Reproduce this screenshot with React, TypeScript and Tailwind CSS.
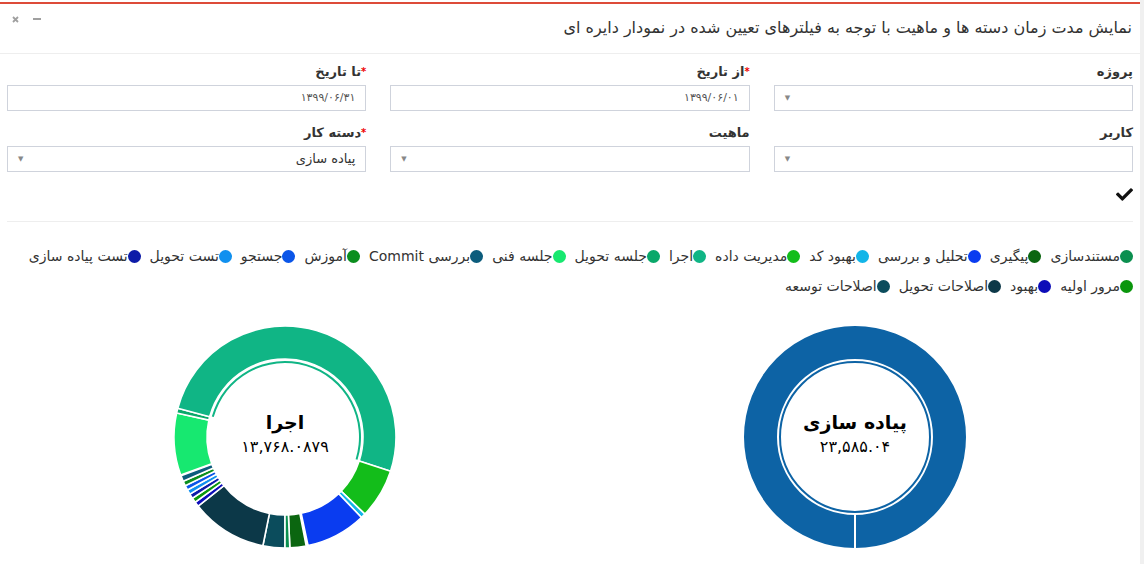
import React from 'react';

const font = { fontFamily: '"DejaVu Sans", "Liberation Sans", sans-serif' };

type Slice = { label: string; color: string; from: number; to: number };

const legend = [
  { label: 'مستندسازی', color: '#0b8f4f' },
  { label: 'پیگیری', color: '#0b6610' },
  { label: 'تحلیل و بررسی', color: '#0a3cf0' },
  { label: 'بهبود کد', color: '#12b5e8' },
  { label: 'مدیریت داده', color: '#13bd1a' },
  { label: 'اجرا', color: '#10b585' },
  { label: 'جلسه تحویل', color: '#0aa86a' },
  { label: 'جلسه فنی', color: '#17e870' },
  { label: 'بررسی Commit', color: '#0c5c7c' },
  { label: 'آموزش', color: '#0b8e1e' },
  { label: 'جستجو', color: '#0a55e8' },
  { label: 'تست تحویل', color: '#1090ef' },
  { label: 'تست پیاده سازی', color: '#0d1ba8' },
  { label: 'مرور اولیه', color: '#0a960c' },
  { label: 'بهبود', color: '#0c0cb8' },
  { label: 'اصلاحات تحویل', color: '#0c3848' },
  { label: 'اصلاحات توسعه', color: '#0b4c5c' },
];

// angles in degrees, clockwise from top
const slices: Slice[] = [
  { label: 'اصلاحات توسعه', color: '#0b4c5c', from: 180, to: 191.5 },
  { label: 'اصلاحات تحویل', color: '#0c3848', from: 191.5, to: 231.5 },
  { label: 'بهبود', color: '#0c0cb8', from: 231.5, to: 234 },
  { label: 'مرور اولیه', color: '#0a960c', from: 234, to: 236.5 },
  { label: 'تست پیاده سازی', color: '#0d1ba8', from: 236.5, to: 239 },
  { label: 'تست تحویل', color: '#1090ef', from: 239, to: 241.5 },
  { label: 'جستجو', color: '#0a55e8', from: 241.5, to: 244 },
  { label: 'آموزش', color: '#0b8e1e', from: 244, to: 246.5 },
  { label: 'بررسی Commit', color: '#0c5c7c', from: 246.5, to: 249.5 },
  { label: 'جلسه فنی', color: '#17e870', from: 250, to: 282.5 },
  { label: 'جلسه تحویل', color: '#0aa86a', from: 282.5, to: 285 },
  { label: 'اجرا', color: '#10b585', from: 285, to: 468 },
  { label: 'مدیریت داده', color: '#13bd1a', from: 468, to: 494 },
  { label: 'بهبود کد', color: '#12b5e8', from: 494, to: 496.5 },
  { label: 'تحلیل و بررسی', color: '#0a3cf0', from: 496.5, to: 528 },
  { label: 'پیگیری', color: '#0b6610', from: 529, to: 537.5 },
  { label: 'مستندسازی', color: '#0b8f4f', from: 537.5, to: 540 },
];

const pt = (c: number, r: number, a: number) => {
  const rad = (a * Math.PI) / 180;
  return [c + r * Math.sin(rad), c - r * Math.cos(rad)];
};

function arc(c: number, r0: number, r1: number, a0: number, a1: number) {
  const large = a1 - a0 > 180 ? 1 : 0;
  const [x1, y1] = pt(c, r1, a0);
  const [x2, y2] = pt(c, r1, a1);
  const [x3, y3] = pt(c, r0, a1);
  const [x4, y4] = pt(c, r0, a0);
  return `M${x1} ${y1} A${r1} ${r1} 0 ${large} 1 ${x2} ${y2} L${x3} ${y3} A${r0} ${r0} 0 ${large} 0 ${x4} ${y4} Z`;
}

function Donut({ data, title, value, selected }: { data: Slice[]; title: string; value: string; selected: Slice }) {
  const c = 120;
  return (
    <div className="relative w-[240px] h-[240px]">
      <svg width="240" height="240" viewBox="0 0 240 240">
        {data.map(s =>
          s.to - s.from >= 360 ? (
            <g key={s.label}>
              <circle cx={c} cy={c} r={94.5} fill="none" stroke={s.color} strokeWidth={33} />
              <line x1={c} y1={c + 78} x2={c} y2={c + 112} stroke="#fff" strokeWidth={2} />
            </g>
          ) : (
            <path key={s.label} d={arc(c, 78, 111, s.from, s.to)} fill={s.color} stroke="#fff" strokeWidth={1.6} />
          )
        )}
        {selected.to - selected.from >= 360 ? (
          <circle cx={c} cy={c} r={75} fill="none" stroke={selected.color} strokeWidth={2} />
        ) : (
          <path d={arc(c, 74, 76, selected.from + 0.6, selected.to - 0.6)} fill={selected.color} />
        )}
      </svg>
      <div className="absolute inset-0 flex flex-col items-center justify-center pb-[8px]" dir="rtl">
        <div className="text-[19px] leading-[28px] font-bold text-black" style={font}>{title}</div>
        <div className="text-[16px] leading-[22px] text-black" style={font}>{value}</div>
      </div>
    </div>
  );
}

function Field({ label, required, value, select }: { label: string; required?: boolean; value?: string; select?: boolean }) {
  return (
    <div className="flex flex-col">
      <div className="h-[18px] text-[13px] leading-[18px] font-bold text-[#333]" style={font}>
        {required && <span className="text-[#e00] text-[10px] align-top">*</span>}
        {label}
      </div>
      <div className="mt-[4px] h-[26px] border border-[#cfd3dc] bg-white flex items-center px-[10px]">
        <span className={select ? 'flex-1 text-[13px] text-[#333]' : 'flex-1 text-[11px] text-[#555]'} style={font}>{value}</span>
        {select && <span className="text-[7px] text-[#888] leading-none">▼</span>}
      </div>
    </div>
  );
}

export default function App() {
  const ejra = slices.find(s => s.label === 'اجرا')!;
  const single: Slice = { label: 'پیاده سازی', color: '#0d63a5', from: 0, to: 360 };
  return (
    <div className="w-[1144px] h-[564px] overflow-hidden bg-white flex" style={font}>
      <div className="w-[1140px] h-full pt-[2px]">
        <div className="h-full border-t-2 border-[#dd4b39] bg-white flex flex-col">
          <div className="h-[50px] flex items-start justify-between border-b border-[#eeeeee]" dir="rtl">
            <div className="pr-[8px] pt-[13px] text-[16px] leading-[22px] text-[#333]">
              نمایش مدت زمان دسته ها و ماهیت با توجه به فیلترهای تعیین شده در نمودار دایره ای
            </div>
            <div className="flex items-center gap-[14px] pl-[12px] pt-[12px]" dir="ltr">
              <svg width="7" height="7" viewBox="0 0 7 7">
                <path d="M1 1L6 6M6 1L1 6" stroke="#a0a0a0" strokeWidth="1.8" />
              </svg>
              <div className="w-[8px] h-[2px] bg-[#a0a0a0] mt-[-2px]" />
            </div>
          </div>

          <div className="px-[7px]" dir="rtl">
            <div className="grid grid-cols-3 gap-x-[24px] pt-[9px]">
              <Field label="پروژه" select />
              <Field label="از تاریخ" required value="۱۳۹۹/۰۶/۰۱" />
              <Field label="تا تاریخ" required value="۱۳۹۹/۰۶/۳۱" />
            </div>
            <div className="grid grid-cols-3 gap-x-[24px] pt-[13px]">
              <Field label="کاربر" select />
              <Field label="ماهیت" select />
              <Field label="دسته کار" required value="پیاده سازی" select />
            </div>
            <div className="h-[50px] flex items-center border-b border-[#eeeeee] pl-[1px]">
              <svg width="17" height="17" viewBox="0 0 512 512" className="mt-[-4px]">
                <path
                  fill="#111"
                  d="M173.898 439.404l-166.4-166.4c-9.997-9.997-9.997-26.206 0-36.204l36.203-36.204c9.997-9.998 26.207-9.998 36.204 0L192 312.69 432.095 72.596c9.997-9.997 26.207-9.997 36.204 0l36.203 36.204c9.997 9.997 9.997 26.206 0 36.204l-294.4 294.401c-9.998 9.997-26.207 9.997-36.204-.001z"
                />
              </svg>
            </div>
            <div className="flex flex-wrap gap-x-[9px] pt-[19px] pl-[12px]">
              {legend.map(l => (
                <div key={l.label} className="h-[30px] flex items-center text-[14px] text-[#333]">
                  <span className="w-[13px] h-[13px] rounded-full inline-block" style={{ backgroundColor: l.color }} />
                  <span>{l.label}</span>
                </div>
              ))}
            </div>
          </div>

          <div className="grid grid-cols-2 pt-[16px]">
            <div className="flex justify-center">
              <Donut data={slices} title="اجرا" value="۱۳,۷۶۸.۰۸۷۹" selected={ejra} />
            </div>
            <div className="flex justify-center">
              <Donut data={[single]} title="پیاده سازی" value="۲۳,۵۸۵.۰۴" selected={single} />
            </div>
          </div>
        </div>
      </div>
      <div className="w-[4px] h-full bg-[#f0f0f0]" />
    </div>
  );
}
